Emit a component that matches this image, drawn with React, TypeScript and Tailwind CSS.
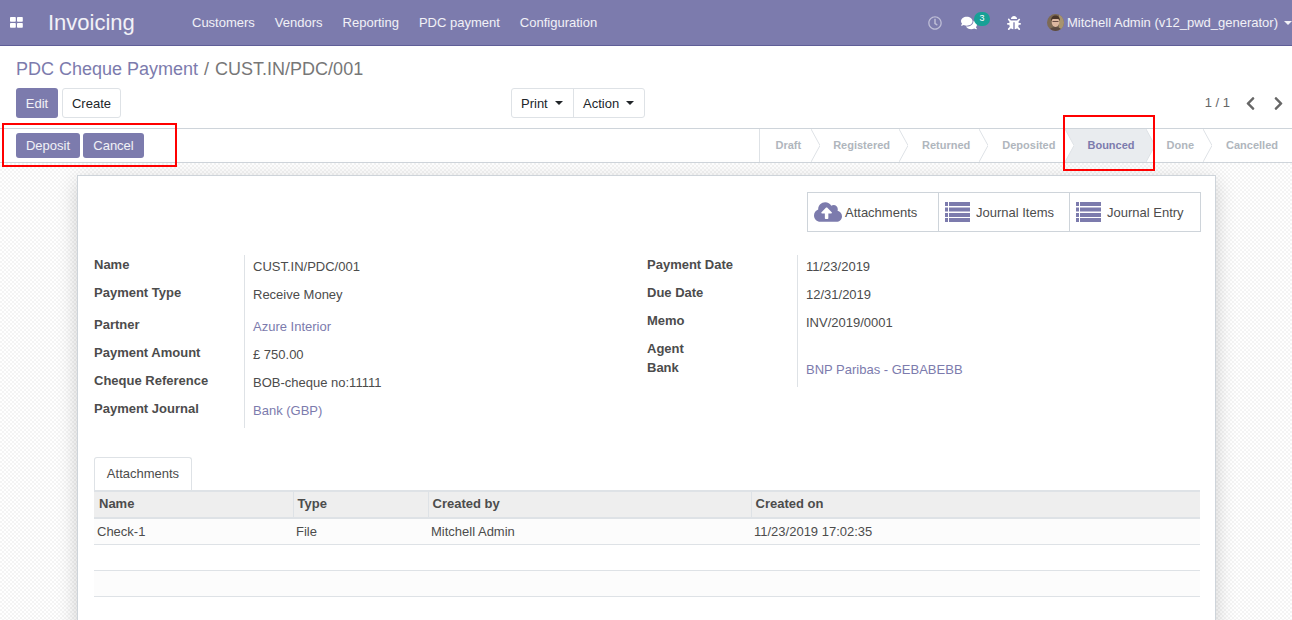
import { FaBug, FaChevronLeft, FaChevronRight, FaCloudUploadAlt, FaComments, FaRegClock } from "react-icons/fa";

const navItems = ["Customers", "Vendors", "Reporting", "PDC payment", "Configuration"];

const steps = [
  { label: "Draft", cls: "pl-[15px] pr-[10px]" },
  { label: "Registered", cls: "pl-[22px] pr-[9px]" },
  { label: "Returned", cls: "pl-[23px] pr-[9px]" },
  { label: "Deposited", cls: "pl-[23px] pr-[10px]" },
  { label: "Bounced", active: true, cls: "pl-[22px] pr-[11px]" },
  { label: "Done", cls: "pl-[21px] pr-[9px]" },
  { label: "Cancelled", last: true, cls: "pl-[23px] pr-[14px]" },
];

const leftFields = [
  { label: "Name", value: "CUST.IN/PDC/001", h: "h-[28px]" },
  { label: "Payment Type", value: "Receive Money", h: "h-[32px]" },
  { label: "Partner", value: "Azure Interior", link: true, h: "h-[28px]" },
  { label: "Payment Amount", value: "£ 750.00", h: "h-[28px]" },
  { label: "Cheque Reference", value: "BOB-cheque no:11111", h: "h-[28px]" },
  { label: "Payment Journal", value: "Bank (GBP)", link: true, h: "h-[29px]" },
];

const rightFields = [
  { label: "Payment Date", value: "11/23/2019", h: "h-[28px]" },
  { label: "Due Date", value: "12/31/2019", h: "h-[28px]" },
  { label: "Memo", value: "INV/2019/0001", h: "h-[28px]" },
  { label: "Agent", value: "", h: "h-[19px]" },
  { label: "Bank", value: "BNP Paribas - GEBABEBB", link: true, h: "h-[29px]" },
];

type Field = { label: string; value: string; link?: boolean; h: string };

const FieldGroup = ({ fields }: { fields: Field[] }) => (
  <div className="w-[553px]">
    {fields.map((f) => (
      <div key={f.label} className={`flex ${f.h}`}>
        <div className="w-[150px] pt-px font-bold leading-[18px] text-[#4c4c4c]">{f.label}</div>
        <div className={`flex-1 border-l border-[#dee2e6] pl-2 pt-[3px] leading-[18px] ${f.link ? "text-[#7c7bad]" : "text-[#4c4c4c]"}`}>
          {f.value}
        </div>
      </div>
    ))}
  </div>
);

const ListIcon = () => (
  <svg width="25" height="20" viewBox="0 0 25 20" fill="#7c7bad">
    <rect x="0" y="0" width="3" height="4" />
    <rect x="4" y="0" width="21" height="4" />
    <rect x="0" y="5.500" width="3" height="4" />
    <rect x="4" y="5.500" width="21" height="4" />
    <rect x="0" y="11" width="3" height="4" />
    <rect x="4" y="11" width="21" height="4" />
    <rect x="0" y="16" width="3" height="4" />
    <rect x="4" y="16" width="21" height="4" />
  </svg>
);

const AppsIcon = () => (
  <svg width="13" height="11" viewBox="0 0 13 11" fill="#ffffff">
    <rect x="0" y="0" width="5.800" height="4.800" rx="0.800" />
    <rect x="7" y="0" width="5.800" height="4.800" rx="0.800" />
    <rect x="0" y="6" width="5.800" height="4.800" rx="0.800" />
    <rect x="7" y="6" width="5.800" height="4.800" rx="0.800" />
  </svg>
);

const Avatar = () => (
  <svg width="17" height="17" viewBox="0 0 17 17" className="rounded-full">
    <rect width="17" height="17" fill="#7d6a55" />
    <rect x="12" width="5" height="17" fill="#a8946e" />
    <ellipse cx="8.500" cy="8" rx="3.800" ry="5" fill="#dcb8a0" />
    <path d="M4 7c0-4 2-5.500 4.500-5.500S13 3 13 7L11.500 5h-6z" fill="#4a362a" />
    <rect x="5.500" y="7" width="6" height="1" fill="#6a5048" />
    <path d="M2 17c1-3 3-4 6.500-4s5.500 1 6.500 4z" fill="#5a4a42" />
  </svg>
);

const Caret = () => (
  <span className="inline-block h-0 w-0 border-x-[4px] border-t-[4px] border-x-transparent border-t-[#212529]" />
);

export default function App() {
  return (
    <div className="relative h-[620px] w-[1292px] overflow-hidden bg-white font-['Liberation_Sans',Arial,sans-serif] text-[13px] text-[#4c4c4c]">
      <header className="flex h-[46px] items-center border-b border-[#5f5e97] bg-[#7c7bad] text-white">
        <div className="ml-[10px] flex w-[38px]">
          <AppsIcon />
        </div>
        <div className="w-[144px] text-[22px] leading-none text-white/90">Invoicing</div>
        <nav className="flex gap-5 text-white/90">
          {navItems.map((n) => (
            <span key={n}>{n}</span>
          ))}
        </nav>
        <div className="ml-auto flex items-center text-white/90">
          <FaRegClock className="text-[14px] text-white/50" />
          <div className="relative ml-[19px] w-[29px]">
            <FaComments className="text-[16px] text-white" />
            <span className="absolute -top-[3px] left-[13px] flex h-[14px] w-[16px] items-center justify-center rounded-full bg-[#17a096] text-[9px] text-white">
              3
            </span>
          </div>
          <FaBug className="ml-[17px] text-[14px] text-white" />
          <div className="ml-[26px] flex items-center gap-[3px]">
            <Avatar />
            <span>Mitchell Admin (v12_pwd_generator)</span>
            <span className="ml-[3px]">
              <span className="mb-[2px] inline-block h-0 w-0 border-x-[4px] border-t-[4px] border-x-transparent border-t-white/90" />
            </span>
          </div>
        </div>
      </header>

      <section className="px-4">
        <div className="flex h-[42px] items-end pb-[7px] text-[18px] leading-[24px]">
          <span className="text-[#7c7bad]">PDC Cheque Payment</span>
          <span className="mx-[6px] text-[#777]">/</span>
          <span className="text-[#777]">CUST.IN/PDC/001</span>
        </div>
        <div className="flex h-[40px] items-start">
          <div className="flex w-[495px] gap-1">
            <button type="button" className="h-[30px] w-[42px] rounded-[3px] bg-[#7c7bad] pt-px text-white/90">
              Edit
            </button>
            <button type="button" className="h-[30px] w-[59px] rounded-[3px] border border-[#dee2e6] bg-white pt-px text-[#212529]">
              Create
            </button>
          </div>
          <div className="flex h-[30px] rounded-[3px] border border-[#dee2e6] text-[#212529]">
            <button type="button" className="flex w-[62px] items-center gap-[7px] border-r border-[#dee2e6] pl-[9px] pt-px">
              Print <span className="mb-[5px]"><Caret /></span>
            </button>
            <button type="button" className="flex w-[70px] items-center gap-[7px] pl-[9px] pt-px">
              Action <span className="mb-[5px]"><Caret /></span>
            </button>
          </div>
          <div className="-mr-[10px] ml-auto flex h-[30px] items-center text-[#666]">
            <span>1 / 1</span>
            <FaChevronLeft className="ml-[13px] text-[15px] text-[#666]" />
            <FaChevronRight className="ml-[13px] text-[15px] text-[#666]" />
          </div>
        </div>
      </section>

      <section className="flex h-[35px] items-stretch justify-between border-y border-[#ced4da] bg-white">
        <div className="flex items-start gap-[3px] pl-4 pt-1">
          <button type="button" className="h-[25px] w-[64px] rounded-[3px] bg-[#7c7bad] text-white/90">
            Deposit
          </button>
          <button type="button" className="h-[25px] w-[61px] rounded-[3px] bg-[#7c7bad] text-white/90">
            Cancel
          </button>
        </div>
        <div className="flex border-l border-[#dee2e6] text-[11px] font-bold text-[#b0b6bd]">
          {steps.map((s) => (
            <div
              key={s.label}
              className={`relative flex items-center ${s.cls} ${s.active ? "bg-[#e9ecef] text-[#7c7bad]" : ""}`}
            >
              {s.label}
              {!s.last && (
                <svg width="9" height="33" viewBox="0 0 9 33" className="absolute -right-[9px] top-0 z-10">
                  <path d="M0 0L9 16.500L0 33" fill={s.active ? "#e9ecef" : "#fff"} stroke="#dee2e6" />
                </svg>
              )}
            </div>
          ))}
        </div>
      </section>

      <main className="h-[458px] bg-[repeating-conic-gradient(#f4f4f4_0_25%,#fff_0_50%)] bg-[length:4px_4px] pl-[77px] pt-[12px]">
        <div className="h-[460px] w-[1139px] border border-[#ced4da] bg-white pl-4 pr-[15px] pt-4 shadow-[0_5px_20px_-1px_rgba(0,0,0,0.2)]">
          <div className="-mr-px flex justify-end">
            <div className="flex h-[40px] border border-[#ced4da] text-[#4c4c4c]">
              <div className="flex w-[130px] items-center gap-[3px] pl-[6px]">
                <FaCloudUploadAlt className="text-[28px] text-[#7c7bad]" />
                <span className="mt-[2px]">Attachments</span>
              </div>
              <div className="flex w-[131px] items-center gap-[6px] border-l border-[#ced4da] pl-[6px]">
                <ListIcon />
                <span className="mt-[2px]">Journal Items</span>
              </div>
              <div className="flex w-[131px] items-center gap-[6px] border-l border-[#ced4da] pl-[6px]">
                <ListIcon />
                <span className="mt-[2px]">Journal Entry</span>
              </div>
            </div>
          </div>

          <div className="mt-[23px] flex">
            <FieldGroup fields={leftFields} />
            <FieldGroup fields={rightFields} />
          </div>

          <div className="mt-[29px] flex">
            <div className="flex h-[33px] w-[98px] items-center justify-center rounded-t-[3px] border border-b-0 border-[#dee2e6] bg-white">
              Attachments
            </div>
          </div>

          <table className="w-[1106px] table-fixed border-collapse">
            <colgroup>
              <col className="w-[199px]" />
              <col className="w-[135px]" />
              <col className="w-[323px]" />
              <col />
            </colgroup>
            <thead>
              <tr className="h-[27px] border-y-[2px] border-[#dee2e6] bg-[#eeeeee] font-bold">
                <th className="border-r border-[#dee2e6] pb-[2px] pl-[5px] text-left">Name</th>
                <th className="border-r border-[#dee2e6] pb-[2px] pl-[4px] text-left">Type</th>
                <th className="border-r border-[#dee2e6] pb-[2px] pl-[4px] text-left">Created by</th>
                <th className="pb-[2px] pl-[4px] text-left">Created on</th>
              </tr>
            </thead>
            <tbody>
              <tr className="h-[26px] border-b border-[#dee2e6] bg-[#fcfcfc]">
                <td className="pl-[3px]">Check-1</td>
                <td className="pl-[3px]">File</td>
                <td className="pl-[3px]">Mitchell Admin</td>
                <td className="pl-[3px]">11/23/2019 17:02:35</td>
              </tr>
              <tr className="h-[26px] border-b border-[#dee2e6] bg-white">
                <td colSpan={4} />
              </tr>
              <tr className="h-[26px] border-b border-[#dee2e6] bg-[#fcfcfc]">
                <td colSpan={4} />
              </tr>
            </tbody>
          </table>
        </div>
      </main>

      {/* red annotation boxes from the screenshot */}
      <div className="pointer-events-none absolute left-[2px] top-[123px] h-[44px] w-[175px] border-2 border-[#ff0000]" />
      <div className="pointer-events-none absolute left-[1063px] top-[115px] z-20 h-[56px] w-[92px] border-2 border-[#ff0000]" />
    </div>
  );
}
